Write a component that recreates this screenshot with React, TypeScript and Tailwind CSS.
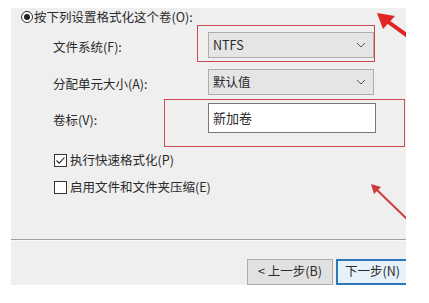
import React from "react";

const Chevron = () => (
  <svg width="10" height="6" viewBox="0 0 10 6" className="shrink-0">
    <path d="M1 1 L5 5 L9 1" fill="none" stroke="#555" strokeWidth="1" />
  </svg>
);

const Dropdown = ({ value }: { value: string }) => (
  <div className="flex h-[26px] w-[166px] items-center justify-between border border-[#adadad] bg-[#e5e5e5] pl-[4px] pr-[7px]">
    <span>{value}</span>
    <Chevron />
  </div>
);

const FormRow = ({ label, children }: { label: string; children: React.ReactNode }) => (
  <div className="flex items-center">
    <div className="w-[155px] pt-[3px]">{label}</div>
    {children}
  </div>
);

const Checkbox = ({ checked, label }: { checked?: boolean; label: string }) => (
  <div className="flex h-[16px] items-center gap-[3px] pl-[43px]">
    <div className="flex h-[13px] w-[13px] items-center justify-center border border-[#333] bg-white">
      {checked && (
        <svg width="11" height="11" viewBox="0 0 11 11">
          <path d="M1.5 5.5 L4.2 8.2 L9.5 2.5" fill="none" stroke="#222" strokeWidth="1.1" />
        </svg>
      )}
    </div>
    <span>{label}</span>
  </div>
);

export default function App() {
  return (
    <div
      className="h-[303px] w-[429px] overflow-hidden bg-white pl-[11px] pt-[8px] text-[12.5px] leading-[16px] text-[#2a2a2a]"
      style={{ fontFamily: '"Noto Sans CJK SC", "Noto Sans", sans-serif' }}
    >
      <div className="relative flex h-[277px] w-[395px] flex-col overflow-hidden bg-[#efefef]">
        {/* format option */}
        <div className="flex h-[18px] items-center gap-[1px] pl-[10px]">
          <div className="flex h-[12px] w-[12px] items-center justify-center rounded-full border border-[#333] bg-white">
            <div className="h-[6px] w-[6px] rounded-full bg-[#222]" />
          </div>
          <span>按下列设置格式化这个卷(O):</span>
        </div>

        <div className="mt-[7px] flex flex-col pl-[42px]">
          <FormRow label="文件系统(F):">
            <Dropdown value="NTFS" />
          </FormRow>
          <div className="mt-[11px]">
            <FormRow label="分配单元大小(A):">
              <Dropdown value="默认值" />
            </FormRow>
          </div>
          <div className="mt-[8px]">
            <FormRow label="卷标(V):">
              <div className="flex h-[30px] w-[168px] items-center border border-[#7a7a7a] bg-white pl-[4px] text-[13px]">
                新加卷
              </div>
            </FormRow>
          </div>
        </div>

        <div className="mt-[19px] flex flex-col gap-[11px]">
          <Checkbox checked label="执行快速格式化(P)" />
          <Checkbox label="启用文件和文件夹压缩(E)" />
        </div>

        <div className="mt-[44px] h-[2px] border-b border-t border-b-[#f8f8f8] border-t-[#a0a0a0]" />

        <div className="mt-[18px] flex gap-[3px] pl-[236px]">
          <div className="flex h-[26px] w-[86px] shrink-0 items-center justify-center border border-[#adadad] bg-[#e1e1e1] pb-[3px]">
            &lt; 上一步(B)
          </div>
          <div className="flex h-[26px] w-[86px] shrink-0 items-center border-2 border-[#2b79b8] bg-[#e5f1fb] pb-[3px] pl-[7px]">
            下一步(N)
          </div>
        </div>

        {/* red annotations */}
        <div className="pointer-events-none absolute left-[186px] top-[17px] h-[37px] w-[178px] border border-[#cc4a4a]" />
        <div className="pointer-events-none absolute left-[153px] top-[91px] h-[48px] w-[241px] border border-[#cc4a4a]" />
        <svg className="pointer-events-none absolute left-0 top-0" width="395" height="277">
          <line x1="376" y1="13" x2="398" y2="29" stroke="#e12424" strokeWidth="4" />
          <polygon points="366,5 384,8 372,21" fill="#e12424" />
          <line x1="365" y1="181" x2="398" y2="213" stroke="#d03a3a" strokeWidth="2" />
          <polygon points="360,176 370,179 363,186" fill="#d03a3a" />
        </svg>
      </div>
    </div>
  );
}
